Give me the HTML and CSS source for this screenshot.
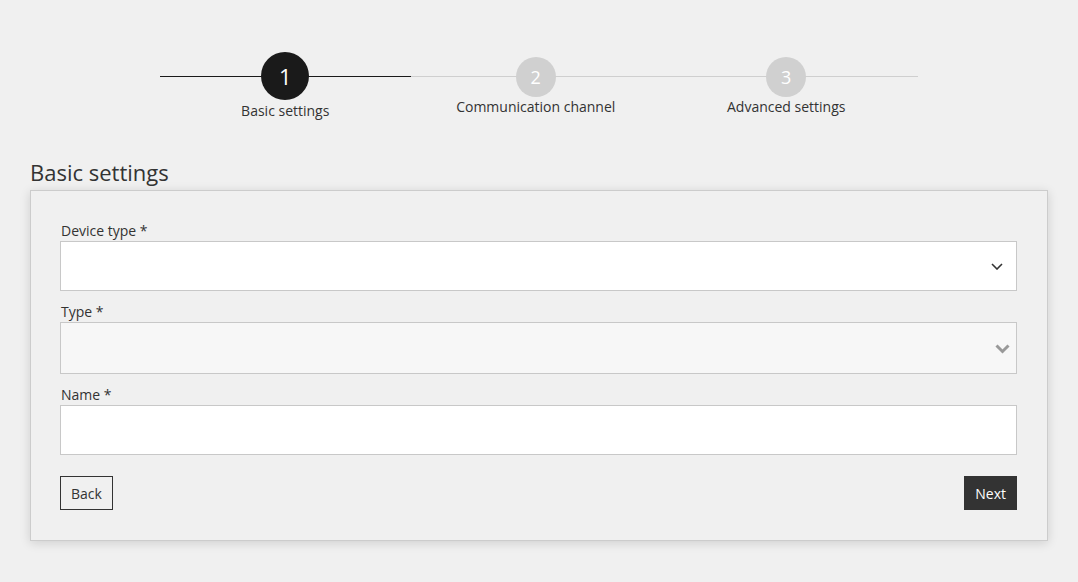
FILE: index.html
```html
<!DOCTYPE html>
<html>
<head>
<meta charset="utf-8">
<link rel="stylesheet" href="styles.css">
</head>
<body>
<div class="page">
  <div class="stepper">
    <div class="step step-active">
      <div class="circle">1</div>
      <div class="step-label">Basic settings</div>
    </div>
    <div class="step">
      <div class="circle">2</div>
      <div class="step-label">Communication channel</div>
    </div>
    <div class="step">
      <div class="circle">3</div>
      <div class="step-label">Advanced settings</div>
    </div>
  </div>

  <h2 class="title">Basic settings</h2>

  <div class="card">
    <div class="field">
      <label class="label">Device type *</label>
      <div class="select">
        <svg class="chev" width="12" height="7" viewBox="0 0 12 7"><path d="M1 1 L6 6 L11 1" fill="none" stroke="#333" stroke-width="1.6"/></svg>
      </div>
    </div>
    <div class="field">
      <label class="label">Type *</label>
      <div class="select select-disabled">
        <svg class="chev chev-big" width="15" height="10" viewBox="0 0 15 10"><path d="M1.5 1.5 L7.5 7.5 L13.5 1.5" fill="none" stroke="#999" stroke-width="3"/></svg>
      </div>
    </div>
    <div class="field">
      <label class="label">Name *</label>
      <div class="input"></div>
    </div>
    <div class="actions">
      <button class="btn btn-outline">Back</button>
      <button class="btn btn-dark">Next</button>
    </div>
  </div>
</div>
</body>
</html>
```

FILE: styles.css
```css
* { box-sizing: border-box; }
html, body { margin: 0; padding: 0; }
body {
  background: #f0f0f0;
  font-family: "Open Sans", "Noto Sans", sans-serif;
  color: #333;
  width: 1078px;
  height: 582px;
  overflow: hidden;
}
.page {
  padding: 52px 30px 0 30px;
}
.stepper {
  position: relative;
  display: flex;
  align-items: center;
  width: 758px;
  margin-left: 130px;
}
.stepper::before {
  content: "";
  position: absolute;
  left: 0;
  right: 0;
  top: 24px;
  height: 1px;
  background: #cfcfcf;
}
.step {
  position: relative;
  width: 250.5px;
  display: flex;
  flex-direction: column;
  align-items: center;
}
.step-active::before {
  content: "";
  position: absolute;
  left: 0;
  right: 0;
  top: 24px;
  height: 1px;
  background: #1a1a1a;
}
.circle {
  position: relative;
  width: 40px;
  height: 40px;
  border-radius: 50%;
  background: #d0d0d0;
  color: #fff;
  font-size: 18px;
  display: flex;
  align-items: center;
  justify-content: center;
}
.step-active .circle {
  width: 48px;
  height: 48px;
  background: #1a1a1a;
  font-size: 22px;
}
.step-label {
  font-size: 14px;
  line-height: 20px;
  color: #333;
  margin-top: 0;
}
.step-active .step-label { margin-top: 1px; }

.title {
  font-weight: 400;
  font-size: 22px;
  line-height: 30px;
  margin: 36px 0 3px 0;
  color: #333;
}
.card {
  background: #f0f0f0;
  border: 1px solid #cccccc;
  box-shadow: 0 2px 10px rgba(0,0,0,0.14);
  padding: 30px 30px 30px 29px;
}
.field {
  display: flex;
  flex-direction: column;
  margin-bottom: 11px;
}
.label {
  font-size: 14px;
  line-height: 20px;
  color: #333;
  padding-left: 1px;
}
.select, .input {
  position: relative;
  height: 50px;
  background: #fff;
  border: 1px solid #c8c8c8;
}
.select-disabled {
  height: 52px;
  background: #f7f7f7;
}
.chev {
  position: absolute;
  right: 13px;
  top: 21px;
}
.chev-big {
  right: 6px;
  top: 21px;
}
.actions {
  display: flex;
  justify-content: space-between;
  margin-top: 21px;
}
.btn {
  font-family: "Open Sans", "Noto Sans", sans-serif;
  font-size: 14px;
  height: 34px;
  padding: 0 10px;
  cursor: pointer;
}
.btn-outline {
  background: transparent;
  border: 1px solid #333;
  color: #333;
}
.btn-dark {
  background: #333;
  border: 1px solid #333;
  color: #fff;
}
```
